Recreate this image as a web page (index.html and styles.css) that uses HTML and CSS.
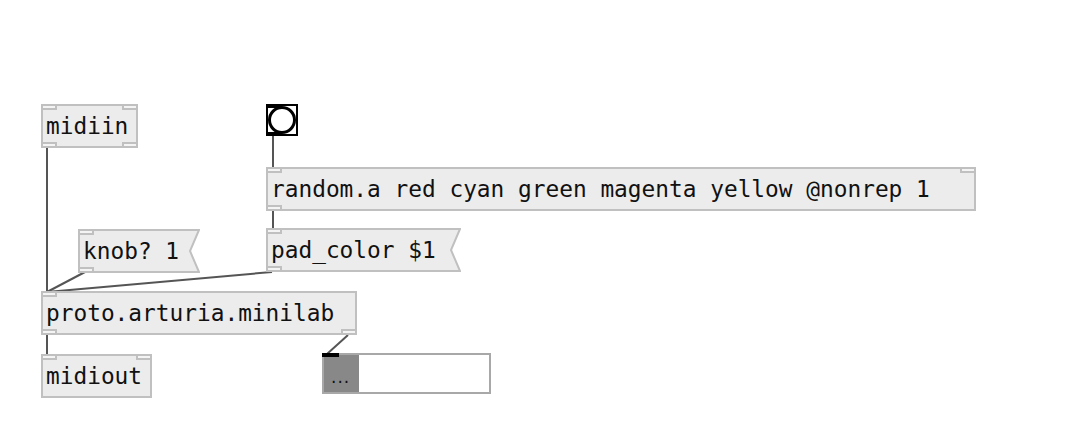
FILE: index.html
```html
<!DOCTYPE html>
<html>
<head>
<meta charset="utf-8">
<link rel="stylesheet" href="styles.css">
</head>
<body>
<div class="canvas">
  <svg class="cords" width="1082" height="432" viewBox="0 0 1082 432">
    <g stroke="#555" stroke-width="2" fill="none">
      <line x1="47" y1="148" x2="47" y2="292"/>
      <line x1="273" y1="136" x2="273" y2="168"/>
      <line x1="273" y1="211" x2="273" y2="229"/>
      <line x1="272" y1="272" x2="47" y2="292"/>
      <line x1="85" y1="272" x2="47" y2="292"/>
      <line x1="47" y1="335" x2="47" y2="354"/>
      <line x1="348" y1="335" x2="327" y2="354"/>
    </g>
  </svg>

  <div class="obj o-midiin"><span class="txt">midiin</span><i class="io tl"></i><i class="io tr"></i><i class="io bl"></i><i class="io br"></i></div>

  <div class="bang"><i class="bio top"></i><i class="bio bot"></i><span class="circle"></span></div>

  <div class="obj o-random"><span class="txt">random.a red cyan green magenta yellow @nonrep 1</span><i class="io tl"></i><i class="io tr"></i><i class="io bl"></i></div>

  <div class="msg m-knob">
    <svg class="shape" width="122" height="44" viewBox="0 0 122 44"><polygon points="1,1 121,1 112,22 121,43 1,43" fill="#ececec" stroke="#c0c0c0" stroke-width="2"/></svg>
    <span class="txt">knob? 1</span><i class="io tl"></i><i class="io bl"></i>
  </div>

  <div class="msg m-pad">
    <svg class="shape" width="195" height="44" viewBox="0 0 195 44"><polygon points="1,1 194,1 185,22 194,43 1,43" fill="#ececec" stroke="#c0c0c0" stroke-width="2"/></svg>
    <span class="txt">pad_color $1</span><i class="io tl"></i><i class="io bl"></i>
  </div>

  <div class="obj o-proto"><span class="txt">proto.arturia.minilab</span><i class="io tl"></i><i class="io bl"></i><i class="io br"></i></div>

  <div class="obj o-midiout"><span class="txt">midiout</span><i class="io tl"></i><i class="io tr"></i></div>

  <div class="atom"><span class="atom-l">...</span><span class="atom-r"></span><i class="ain"></i></div>
</div>
</body>
</html>
```
FILE: styles.css
```css
html, body {
  margin: 0;
  padding: 0;
  background: #ffffff;
}
.canvas {
  position: relative;
  width: 1082px;
  height: 432px;
  overflow: hidden;
  background: #fff;
  font-family: "DejaVu Sans Mono", "Liberation Mono", monospace;
  font-size: 22.8px;
  color: #111;
}
.cords {
  position: absolute;
  left: 0;
  top: 0;
}
.obj {
  position: absolute;
  box-sizing: border-box;
  height: 44px;
  background: #ececec;
  border: 2px solid #c0c0c0;
}
.txt {
  position: absolute;
  left: 3px;
  top: 7px;
  line-height: 26px;
  white-space: pre;
}
.o-midiin { left: 41px; top: 104px; width: 97px; }
.o-random { left: 266px; top: 167px; width: 710px; }
.o-proto { left: 41px; top: 291px; width: 316px; }
.o-midiout { left: 41px; top: 354px; width: 111px; }

.io {
  position: absolute;
  width: 12px;
  height: 2px;
  background: #f4f4f4;
  border: 2px solid #c0c0c0;
}
.io.tl { left: -2px; top: -2px; }
.io.tr { right: -2px; top: -2px; }
.io.bl { left: -2px; bottom: -2px; }
.io.br { right: -2px; bottom: -2px; }

.msg {
  position: absolute;
  height: 44px;
}
.msg .shape {
  position: absolute;
  left: 0;
  top: 0;
}
.msg .txt { left: 5px; top: 9px; }
.msg .io.tl { left: 0; top: 0; }
.msg .io.bl { left: 0; bottom: 0; }
.m-knob { left: 78px; top: 229px; width: 122px; }
.m-pad { left: 266px; top: 228px; width: 195px; }

.bang {
  position: absolute;
  left: 266px;
  top: 104px;
  width: 32px;
  height: 32px;
  box-sizing: border-box;
  border: 2px solid #000;
  background: #fff;
}
.bang .circle {
  position: absolute;
  left: 0;
  top: 0;
  width: 28px;
  height: 28px;
  box-sizing: border-box;
  border: 3px solid #000;
  border-radius: 50%;
}
.bio {
  position: absolute;
  left: -2px;
  width: 16px;
  height: 4px;
  background: #000;
}
.bio.top { top: -2px; }
.bio.bot { bottom: -2px; }

.atom {
  position: absolute;
  left: 322px;
  top: 353px;
  width: 169px;
  height: 41px;
  display: flex;
  box-sizing: border-box;
  border: 2px solid #a8a8a8;
  background: #fff;
}
.atom-l {
  width: 35px;
  background: #888;
  font-family: "DejaVu Sans", sans-serif;
  font-size: 17px;
  line-height: 20px;
  color: #111;
  padding-left: 7px;
  padding-top: 12px;
  box-sizing: border-box;
  letter-spacing: 1px;
}
.atom-r {
  flex: 1;
  background: #fff;
}
.ain {
  position: absolute;
  left: -2px;
  top: -2px;
  width: 17px;
  height: 4px;
  background: #000;
}
```
